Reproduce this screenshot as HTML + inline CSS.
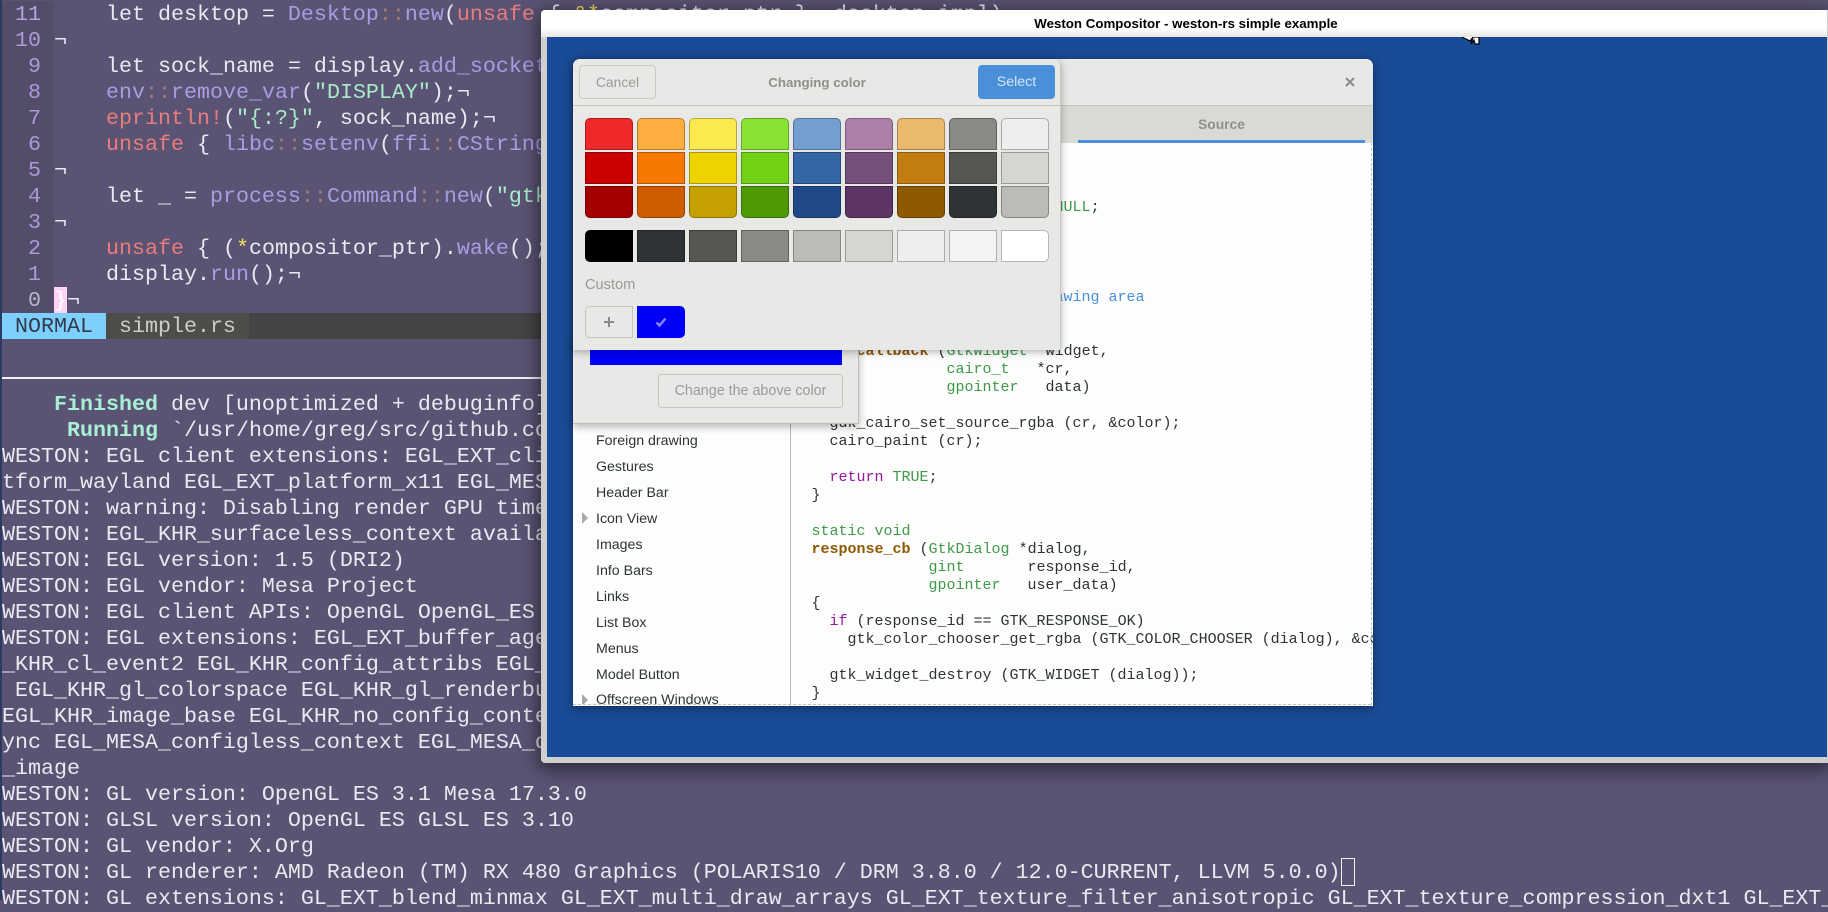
<!DOCTYPE html>
<html><head><meta charset="utf-8"><style>
html,body{margin:0;padding:0;width:1828px;height:900px;overflow:hidden;background:#5a5373}
*{box-sizing:border-box}
.a{position:absolute}
.t{position:absolute;left:2px;white-space:pre;font:21.67px/26px "Liberation Mono",monospace;color:#e9e9f0;height:26px;padding-top:1px}
.g{color:#a89bd8}.p{color:#aa9ce2}.r{color:#e87d7d}.c{color:#a27c6c}.s{color:#a8ecca}.y{color:#f5e05a}.b{font-weight:bold;color:#a8f0d2}
.sw{position:absolute;width:48px;height:32px;border:1px solid rgba(0,0,0,.28)}
.top{border-radius:5px 5px 0 0}.bot{border-radius:0 0 5px 5px}
.ui{font-family:"Liberation Sans",sans-serif}
.li{position:absolute;left:596px;font:14.2px/20px "Liberation Sans",sans-serif;color:#2e3436;white-space:pre}
#code{position:absolute;left:20.5px;top:2px;margin:0;font:15px/18px "Liberation Mono",monospace;color:#2e3436;white-space:pre}
.gr{color:#3f9a48}.k{color:#98169a}.f{color:#8f5902;font-weight:bold}.cm{color:#4a90d9}
</style></head><body>
<div class="a" style="left:2px;top:1px;width:52px;height:312px;background:#544d6a"></div>
<div class="t" style="top:1px"> <span class="g" style="color:#b0a4dc">11</span>     let desktop = <span class="p">Desktop</span><span class="c">::</span><span class="p">new</span>(<span class="r">unsafe</span> { <span class="y">&amp;*</span>compositor_ptr }, desktop_impl)</div>
<div class="t" style="top:27px"> <span class="g">10</span> ¬</div>
<div class="t" style="top:53px">  <span class="g">9</span>     let sock_name = display.<span class="p">add_socket</span></div>
<div class="t" style="top:79px">  <span class="g">8</span>     <span class="p">env</span><span class="c">::</span><span class="p">remove_var</span>(<span class="s">"DISPLAY"</span>);¬</div>
<div class="t" style="top:105px">  <span class="g">7</span>     <span class="r">eprintln!</span>(<span class="s">"{:?}"</span>, sock_name);¬</div>
<div class="t" style="top:131px">  <span class="g">6</span>     <span class="r">unsafe</span> { <span class="p">libc</span><span class="c">::</span><span class="p">setenv</span>(<span class="p">ffi</span><span class="c">::</span><span class="p">CString</span></div>
<div class="t" style="top:157px">  <span class="g">5</span> ¬</div>
<div class="t" style="top:183px">  <span class="g">4</span>     let _ = <span class="p">process</span><span class="c">::</span><span class="p">Command</span><span class="c">::</span><span class="p">new</span>(<span class="s">"gtk</span></div>
<div class="t" style="top:209px">  <span class="g">3</span> ¬</div>
<div class="t" style="top:235px">  <span class="g">2</span>     <span class="r">unsafe</span> { (<span class="y">*</span>compositor_ptr).<span class="p">wake</span>();</div>
<div class="t" style="top:261px">  <span class="g">1</span>     display.<span class="p">run</span>();¬</div>
<div class="a" style="left:54px;top:287px;width:13px;height:26px;background:#ffd4f6"></div>
<div class="t" style="top:287px">  <span class="g" style="color:#b9b5c8">0</span> <span style="color:#fff">}</span>¬</div>
<div class="a" style="left:2px;top:313px;width:1826px;height:26px;background:#444"></div>
<div class="a" style="left:2px;top:313px;width:104px;height:26px;background:#7dd0fe"></div>
<div class="a" style="left:106px;top:313px;width:143px;height:26px;background:#4d4d49"></div>
<div class="t" style="top:313px;color:#34394c"> NORMAL  <span style="color:#cdcdc8">simple.rs</span></div>
<div class="a" style="left:2px;top:377px;width:1826px;height:2px;background:#f2f2f6"></div>

<div class="t" style="top:391px">    <span class="b">Finished</span> dev [unoptimized + debuginfo] target(s) in 0.0 secs</div>
<div class="t" style="top:417px">     <span class="b">Running</span> `/usr/home/greg/src/github.com/myfreeweb/weston-rs</div>
<div class="t" style="top:443px">WESTON: EGL client extensions: EGL_EXT_client_extensions EGL_EXT_pla</div>
<div class="t" style="top:469px">tform_wayland EGL_EXT_platform_x11 EGL_MESA_platform</div>
<div class="t" style="top:495px">WESTON: warning: Disabling render GPU timeline</div>
<div class="t" style="top:521px">WESTON: EGL_KHR_surfaceless_context available</div>
<div class="t" style="top:547px">WESTON: EGL version: 1.5 (DRI2)</div>
<div class="t" style="top:573px">WESTON: EGL vendor: Mesa Project</div>
<div class="t" style="top:599px">WESTON: EGL client APIs: OpenGL OpenGL_ES</div>
<div class="t" style="top:625px">WESTON: EGL extensions: EGL_EXT_buffer_age EGL_EXT</div>
<div class="t" style="top:651px">_KHR_cl_event2 EGL_KHR_config_attribs EGL_KHR</div>
<div class="t" style="top:677px"> EGL_KHR_gl_colorspace EGL_KHR_gl_renderbuffer</div>
<div class="t" style="top:703px">EGL_KHR_image_base EGL_KHR_no_config_context</div>
<div class="t" style="top:729px">ync EGL_MESA_configless_context EGL_MESA_drm</div>
<div class="t" style="top:755px">_image</div>
<div class="t" style="top:781px">WESTON: GL version: OpenGL ES 3.1 Mesa 17.3.0</div>
<div class="t" style="top:807px">WESTON: GLSL version: OpenGL ES GLSL ES 3.10</div>
<div class="t" style="top:833px">WESTON: GL vendor: X.Org</div>
<div class="t" style="top:859px">WESTON: GL renderer: AMD Radeon (TM) RX 480 Graphics (POLARIS10 / DRM 3.8.0 / 12.0-CURRENT, LLVM 5.0.0)</div>
<div class="a" style="left:1341px;top:858px;width:14px;height:28px;border:1px solid #f0f0f4"></div>
<div class="t" style="top:885px">WESTON: GL extensions: GL_EXT_blend_minmax GL_EXT_multi_draw_arrays GL_EXT_texture_filter_anisotropic GL_EXT_texture_compression_dxt1 GL_EXT_</div>
<div class="a" style="left:0;top:0;width:2px;height:900px;background:#2c3a60"></div>

<!-- weston window -->
<div class="a" style="left:541px;top:10px;width:1287px;height:753px;background:#cfcfcf;box-shadow:0 4px 18px 2px rgba(0,0,0,.55);border-radius:4px 0 0 4px"></div>
<div class="a" style="left:541px;top:10px;width:1286px;height:27px;background:linear-gradient(#fff 0,#fff 65%,#e6e6e4 100%);border-radius:4px 0 0 0"></div>
<div class="a ui" style="left:886px;width:600px;text-align:center;top:14px;line-height:20px;font-size:13.3px;font-weight:bold;color:#000;white-space:pre">Weston Compositor - weston-rs simple example</div>
<div class="a" style="left:547px;top:37px;width:1280px;height:720px;background:#1a4b96"></div>
<svg class="a" style="left:1460px;top:37px" width="22" height="10"><path d="M2 0 L10 4 L13 0 L13 0 M13 0 L19 0 L19 7 L15 7 L14 3 L11 7 Z" fill="#fff" stroke="#000" stroke-width="1.2"/></svg>

<!-- gtk demo window -->
<div class="a" style="left:573px;top:59px;width:800px;height:647px;background:#fdfdfd;border-radius:7px 7px 0 0;box-shadow:0 2px 10px rgba(0,0,0,.4);overflow:hidden">
  <div class="a" style="left:0;top:0;width:800px;height:47px;background:#e8e8e6;border-bottom:1px solid #c6c6c2"></div>
  <div class="a" style="left:0;top:47px;width:800px;height:37px;background:#d9d9d6"></div>
  <div class="a ui" style="left:505px;width:287px;top:49px;text-align:center;line-height:34px;font-size:13.8px;font-weight:bold;color:#8f8f8c">Source</div>
  <div class="a" style="left:505px;top:81px;width:287px;height:3px;background:#4a90d9"></div>
  <div class="a" style="left:217px;top:84px;width:1px;height:563px;background:#b8b8b6"></div>
</div>
<svg class="a" style="left:1345px;top:77px" width="10" height="10"><path d="M1 1L9 9M9 1L1 9" stroke="#8c8c8a" stroke-width="2"/></svg>
<div class="a" style="left:791px;top:143px;width:582px;height:563px;overflow:hidden;background:#fdfdfd">
<pre id="code">
 


                           <span class="gr">NULL</span>;




                         <span class="cm">drawing area</span>


<span class="f">draw_callback</span> (<span class="gr">GtkWidget</span> *widget,
               <span class="gr">cairo_t</span>   *cr,
               <span class="gr">gpointer</span>   data)

  gdk_cairo_set_source_rgba (cr, &amp;color);
  cairo_paint (cr);

  <span class="k">return</span> <span class="gr">TRUE</span>;
}

<span class="gr">static void</span>
<span class="f">response_cb</span> (<span class="gr">GtkDialog</span> *dialog,
             <span class="gr">gint</span>       response_id,
             <span class="gr">gpointer</span>   user_data)
{
  <span class="k">if</span> (response_id == GTK_RESPONSE_OK)
    gtk_color_chooser_get_rgba (GTK_COLOR_CHOOSER (dialog), &amp;color);

  gtk_widget_destroy (GTK_WIDGET (dialog));
}
</pre>
</div>
<div class="li" style="top:431px">Foreign drawing</div>
<div class="li" style="top:457px">Gestures</div>
<div class="li" style="top:483px">Header Bar</div>
<div class="li" style="top:509px">Icon View</div>
<div class="li" style="top:535px">Images</div>
<div class="li" style="top:561px">Info Bars</div>
<div class="li" style="top:587px">Links</div>
<div class="li" style="top:613px">List Box</div>
<div class="li" style="top:639px">Menus</div>
<div class="li" style="top:665px">Model Button</div>
<div class="a" style="left:573px;top:690px;width:217px;height:14px;overflow:hidden"><div class="li" style="left:23px;top:0">Offscreen Windows</div></div>
<svg class="a" style="left:582px;top:512px" width="7" height="12"><path d="M0 0L6 6L0 12Z" fill="#a8a8a6"/></svg>
<svg class="a" style="left:582px;top:694px" width="7" height="10"><path d="M0 0L6 6L0 12Z" fill="#a8a8a6"/></svg>
<div class="a" style="left:573px;top:704px;width:798px;height:0;border-top:1px dashed #c2c2c2"></div>
<div class="a" style="left:1371px;top:143px;width:0;height:562px;border-left:1px dashed #c2c2c2"></div>

<!-- color window under -->
<div class="a" style="left:573px;top:340px;width:286px;height:84px;background:#e8e8e6;border-right:1px solid #bdbdba;border-bottom:1px solid #bdbdba;box-shadow:0 3px 8px rgba(0,0,0,.28)"></div>
<div class="a" style="left:590px;top:340px;width:252px;height:25px;background:#0000f8"></div>
<div class="a ui" style="left:658px;top:374px;width:185px;height:34px;border:1px solid #c4c4c0;border-radius:3px;text-align:center;line-height:33px;font-size:14.3px;color:#9a9a98">Change the above color</div>

<!-- color chooser dialog -->
<div class="a" style="left:573px;top:59px;width:488px;height:291px;background:#e8e8e6;border-radius:7px 7px 0 0;border-right:1px solid #c8c8c4;box-shadow:0 2px 8px rgba(0,0,0,.3)"></div>
<div class="a" style="left:573px;top:105px;width:488px;height:1px;background:#c4c4c0"></div>
<div class="a ui" style="left:579px;top:65px;width:77px;height:34px;border:1px solid #c8c8c4;border-radius:4px;text-align:center;line-height:33px;font-size:13.9px;color:#9a9a98">Cancel</div>
<div class="a ui" style="left:717px;width:200px;top:73px;text-align:center;line-height:20px;font-size:13.3px;font-weight:bold;color:#8f8f8c">Changing color</div>
<div class="a ui" style="left:978px;top:65px;width:77px;height:34px;background:#4a90d9;border-radius:4px;text-align:center;line-height:35px;font-size:14.2px;color:#d6e6f6">Select</div>

<div class="sw top" style="left:585px;top:118px;background:#ef2929"></div>
<div class="sw top" style="left:637px;top:118px;background:#fcaf3e"></div>
<div class="sw top" style="left:689px;top:118px;background:#fce94f"></div>
<div class="sw top" style="left:741px;top:118px;background:#8ae234"></div>
<div class="sw top" style="left:793px;top:118px;background:#729fcf"></div>
<div class="sw top" style="left:845px;top:118px;background:#ad7fa8"></div>
<div class="sw top" style="left:897px;top:118px;background:#e9b96e"></div>
<div class="sw top" style="left:949px;top:118px;background:#888a85"></div>
<div class="sw top" style="left:1001px;top:118px;background:#eeeeec"></div>

<div class="sw" style="left:585px;top:152px;background:#cc0000"></div>
<div class="sw" style="left:637px;top:152px;background:#f57900"></div>
<div class="sw" style="left:689px;top:152px;background:#edd400"></div>
<div class="sw" style="left:741px;top:152px;background:#73d216"></div>
<div class="sw" style="left:793px;top:152px;background:#3465a4"></div>
<div class="sw" style="left:845px;top:152px;background:#75507b"></div>
<div class="sw" style="left:897px;top:152px;background:#c17d11"></div>
<div class="sw" style="left:949px;top:152px;background:#555753"></div>
<div class="sw" style="left:1001px;top:152px;background:#d3d7cf"></div>

<div class="sw bot" style="left:585px;top:186px;background:#a40000"></div>
<div class="sw bot" style="left:637px;top:186px;background:#ce5c00"></div>
<div class="sw bot" style="left:689px;top:186px;background:#c4a000"></div>
<div class="sw bot" style="left:741px;top:186px;background:#4e9a06"></div>
<div class="sw bot" style="left:793px;top:186px;background:#204a87"></div>
<div class="sw bot" style="left:845px;top:186px;background:#5c3566"></div>
<div class="sw bot" style="left:897px;top:186px;background:#8f5902"></div>
<div class="sw bot" style="left:949px;top:186px;background:#2e3436"></div>
<div class="sw bot" style="left:1001px;top:186px;background:#babdb6"></div>

<div class="sw" style="left:585px;top:230px;background:#000;border-radius:5px 0 0 5px"></div>
<div class="sw" style="left:637px;top:230px;background:#2e3436"></div>
<div class="sw" style="left:689px;top:230px;background:#555753"></div>
<div class="sw" style="left:741px;top:230px;background:#888a85"></div>
<div class="sw" style="left:793px;top:230px;background:#babdb6"></div>
<div class="sw" style="left:845px;top:230px;background:#d3d7cf"></div>
<div class="sw" style="left:897px;top:230px;background:#eeeeec"></div>
<div class="sw" style="left:949px;top:230px;background:#f3f3f3"></div>
<div class="sw" style="left:1001px;top:230px;background:#fff;border-radius:0 5px 5px 0"></div>

<div class="a ui" style="left:585px;top:275px;line-height:20px;font-size:14.6px;color:#9a9a98">Custom</div>
<div class="a" style="left:585px;top:306px;width:48px;height:32px;border:1px solid #c4c4c0;border-radius:5px 0 0 5px"></div>
<svg class="a" style="left:603px;top:316px" width="12" height="12"><path d="M6 1V11M1 6H11" stroke="#8a8a88" stroke-width="2"/></svg>
<div class="a" style="left:637px;top:306px;width:48px;height:32px;background:#0000f6;border-radius:0 5px 5px 0"></div>
<svg class="a" style="left:655px;top:316px" width="12" height="12"><path d="M1.5 6.5L4.5 9.5L10.5 2.5" fill="none" stroke="#8a82ff" stroke-width="2.4"/></svg>
</body></html>
